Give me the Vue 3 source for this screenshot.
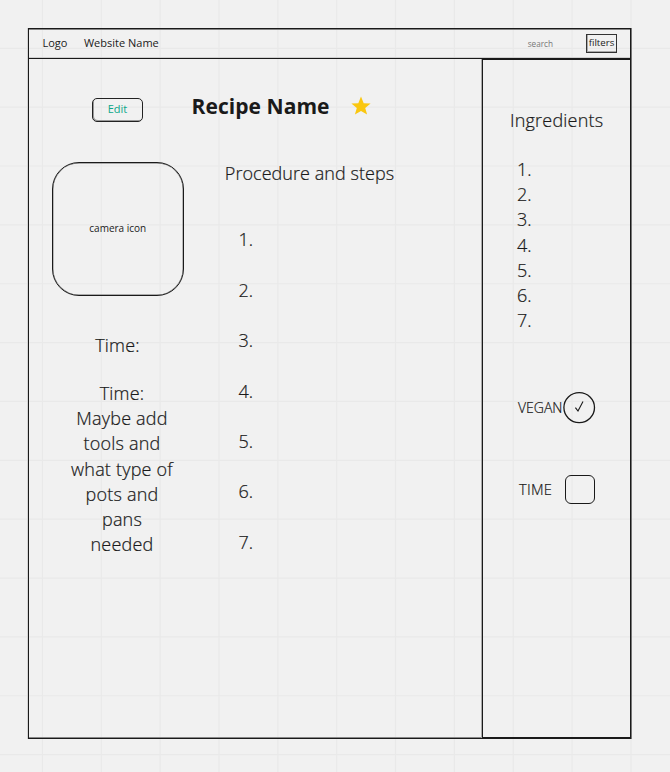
<script setup>
const steps = [1, 2, 3, 4, 5, 6, 7]
const ingredients = [1, 2, 3, 4, 5, 6, 7]
const notes = ['Time:', 'Maybe add', 'tools and', 'what type of', 'pots and', 'pans', 'needed']
const columns = Array.from({ length: 11 }, (_, i) => 42.4 + i * 58.86)
const rows = Array.from({ length: 13 }, (_, i) => 48.3 + i * 58.86)
</script>

<template>
  <div class="board">
    <svg class="grid" width="670" height="772" aria-hidden="true">
      <line v-for="x in columns" :key="'c' + x" :x1="x" :x2="x" y1="0" y2="772" />
      <line v-for="y in rows" :key="'r' + y" :y1="y" :y2="y" x1="0" x2="670" />
    </svg>
    <div class="frame">
      <header class="bar">
        <span class="logo">Logo</span>
        <span class="site">Website Name</span>
        <span class="search">search</span>
        <span class="filters">filters</span>
      </header>
      <div class="body">
        <main class="recipe">
          <div class="title-row">
            <button class="edit">Edit</button>
            <h1>Recipe Name</h1>
            <svg class="star" width="20" height="20" viewBox="0 0 20 20">
              <path d="M10 .5 12.7 7.2 19.6 7.5 14.2 11.9 16.1 18.6 10 14.9 3.9 18.6 5.8 11.9 .4 7.5 7.3 7.2Z" />
            </svg>
          </div>
          <div class="content">
            <section class="side">
              <div class="photo">camera icon</div>
              <p class="time">Time:</p>
              <div class="notes"><div v-for="n in notes" :key="n">{{ n }}</div></div>
            </section>
            <section class="procedure">
              <h2>Procedure and steps</h2>
              <div class="steps"><div v-for="s in steps" :key="s">{{ s }}.</div></div>
            </section>
          </div>
        </main>
        <aside class="sidebar">
          <h2>Ingredients</h2>
          <div class="ingredients"><div v-for="s in ingredients" :key="s">{{ s }}.</div></div>
          <div class="option vegan">
            <span>VEGAN</span>
            <svg width="34" height="34" viewBox="0 0 34 34">
              <ellipse cx="16.2" cy="16.6" rx="15.3" ry="15" />
              <path d="M12.4 16.6 15 20 20 10.6" />
            </svg>
          </div>
          <div class="option timed">
            <span>TIME</span>
            <i class="box"></i>
          </div>
        </aside>
      </div>
    </div>
  </div>
</template>

<style>
body { margin: 0; background: #f1f1f1; }
</style>

<style scoped>
* { box-sizing: border-box; margin: 0; }
.board {
  position: relative;
  width: 670px;
  height: 772px;
  padding: 28px;
  overflow: hidden;
  background: #f1f1f1;
  color: #1a1a1a;
  font: 300 18px/25.2px "Open Sans", sans-serif;
}
.grid { position: absolute; left: 0; top: 0; }
.grid line { stroke: #e9e9e9; stroke-width: 1.2; }
.frame {
  position: relative;
  display: flex;
  flex-direction: column;
  width: 603px;
  height: 711px;
  border: 1px solid #1a1a1a;
  box-shadow: 1px 0 0 #777, -1px 0 0 #d4d4d4, inset 0 1px 0 #858585, inset 0 -1px 0 #888;
}
.bar {
  display: flex;
  height: 30px;
  flex: none;
  align-items: center;
  padding: 0 13px 0 13.5px;
  border-bottom: 1px solid #1a1a1a;
  box-shadow: inset 0 -1px 0 #d0d0d0;
  font-size: 11px;
  font-weight: 400;
  line-height: 15px;
}
.logo, .site { margin-top: -2px; }
.site { margin-left: 16.5px; }
.search { margin-left: auto; font-size: 8.2px; color: #777; }
.filters {
  width: 31px;
  height: 19px;
  margin-left: 33px;
  border: 1px solid #333;
  box-shadow: inset 0 -1px 0 #aaa, inset 1px 0 0 #aaa;
  font-size: 9.7px;
  line-height: 16px;
  text-align: center;
}
.body { display: flex; flex: 1; }
.recipe { width: 453px; }
.title-row { display: flex; height: 102.5px; padding-top: 33px; }
.edit {
  width: 51px;
  height: 24px;
  margin: 6px 0 0 63px;
  padding: 0 0 3px;
  border: 1px solid #222;
  box-shadow: inset 1px -1px 0 #999;
  border-radius: 5px;
  background: none;
  color: #0ca789;
  font: 400 11px/19px "Open Sans", sans-serif;
}
h1 { margin-left: 48.5px; font-size: 21px; font-weight: 700; line-height: 28px; letter-spacing: .06px; white-space: nowrap; }
.star { margin: 4px 0 0 21px; fill: #fac710; }
.content { display: flex; }
.side { width: 177px; text-align: center; }
.side p, .notes, .sidebar, .procedure { -webkit-text-stroke: .22px #1a1a1a; }
.side p, .notes { letter-spacing: .2px; }
.photo {
  width: 132.5px;
  height: 134.5px;
  margin-left: 22.5px;
  border: 1px solid #1a1a1a;
  box-shadow: inset 0 0 0 .4px #666;
  border-radius: 27px;
  font-size: 10px;
  font-weight: 400;
  line-height: 130px;
}
.time { margin-top: 37px; }
.notes { margin: 22.8px 0 0 9px; }
h2 { font-size: 18px; font-weight: 300; line-height: 25.2px; white-space: nowrap; }
.procedure { margin-top: -.5px; padding-left: 18.8px; }
.procedure h2 { letter-spacing: .05px; }
.steps { display: grid; gap: 25.2px; margin: 41.2px 0 0 13.8px; }
.sidebar {
  width: 148px;
  border: 1px solid #1a1a1a;
  border-width: 1px 0 1px 1px;
  box-shadow: -1px 0 0 #aaa;
  padding-top: 48px;
}
.sidebar h2 { margin-left: 27px; letter-spacing: .2px; }
.ingredients { margin: 23.8px 0 0 34px; }
.option { display: flex; align-items: center; font-size: 14px; line-height: 20px; }
.option span { flex: none; margin-top: -1px; }
.vegan { height: 34px; margin: 58px 0 0 35px; }
.vegan span { width: 45px; }
.vegan svg { flex: none; fill: none; stroke: #1a1a1a; stroke-width: 1.3; }
.vegan path { stroke-width: 1.1; }
.timed { height: 30px; margin: 49px 0 0 36px; font-size: 14.6px; letter-spacing: .3px; }
.timed span { width: 46px; margin-top: 0; }
.box { width: 30px; height: 29px; border: 1.3px solid #1a1a1a; border-radius: 6px; }
</style>
